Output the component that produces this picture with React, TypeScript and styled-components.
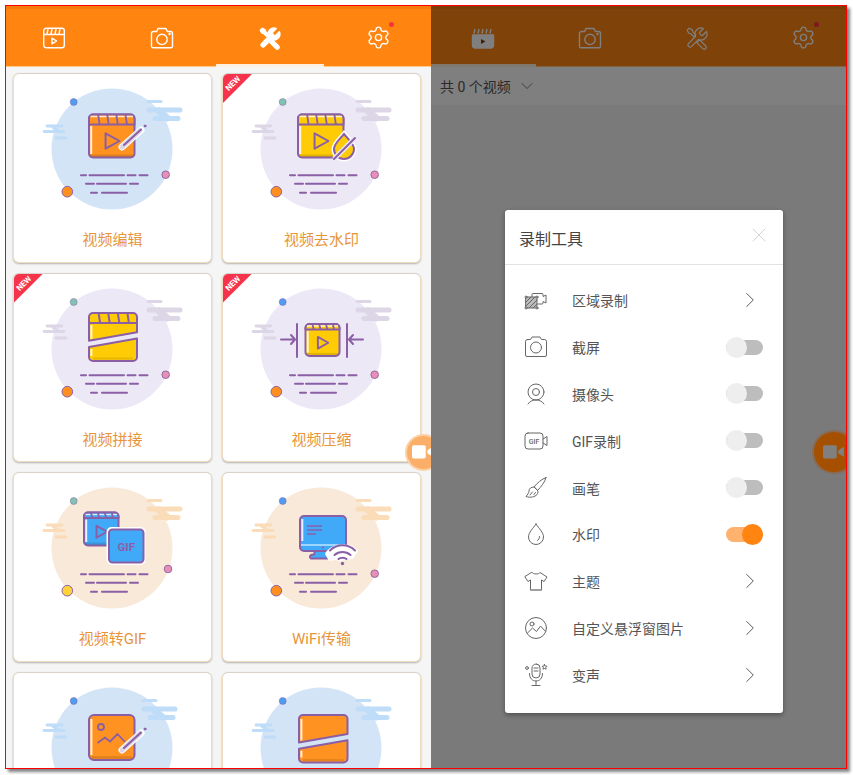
import React from "react";
import styled, { createGlobalStyle } from "styled-components";
import { ChevronDown, ChevronRight, Settings, X } from "lucide-react";

const PURPLE = "#8a5fa6";
const ORANGE = "#ff8410";

const GlobalStyle = createGlobalStyle`
  html, body {
    margin: 0;
    padding: 0;
    height: 100%;
    overflow: hidden;
    background: #fff;
  }
  body {
    font-family: Roboto, "Noto Sans CJK SC", sans-serif;
  }
  * {
    box-sizing: border-box;
  }
`;

const Page = styled.div`
  padding: 5px;
`;

const Frame = styled.div`
  display: flex;
  width: 842px;
  height: 764px;
  border: 1px solid #f00;
  box-shadow: 3px 3px 3px #808080;
  overflow: hidden;
`;

const Pane = styled.section<{ $width?: number }>`
  position: relative;
  flex: ${({ $width }) => ($width ? `0 0 ${$width}px` : "1")};
  overflow: hidden;
  background: #f5f5f5;
`;

const TabBar = styled.div<{ $tab: number; $shift: number }>`
  display: grid;
  grid-template-columns: repeat(4, ${({ $tab }) => $tab}px);
  height: 61px;
  margin-left: ${({ $shift }) => -$shift}px;
  background: ${ORANGE};
  border-top: 3px solid #f47c0c;
  border-bottom: 1px solid #ffc98a;
`;

const TabItem = styled.div<{ $active?: boolean }>`
  position: relative;
  display: flex;
  align-items: center;
  justify-content: center;
  color: #fff;
  &::after {
    content: "";
    position: absolute;
    left: 0;
    right: 0;
    bottom: -1px;
    height: 3px;
    background: ${({ $active }) => ($active ? "#fdf0df" : "transparent")};
  }
`;

const GearWrap = styled.div`
  position: relative;
  display: flex;
`;

const RedDot = styled.span`
  position: absolute;
  top: -3px;
  right: -3px;
  width: 5px;
  height: 5px;
  border-radius: 50%;
  background: #f8333c;
`;

const Grid = styled.div`
  display: grid;
  grid-template-columns: repeat(2, 199px);
  grid-auto-rows: 189.6px;
  gap: 10px;
  padding: 6px 7px;
`;

const CardBox = styled.div`
  position: relative;
  display: flex;
  flex-direction: column;
  align-items: center;
  background: #fff;
  border: 1px solid #f0dcbc;
  border-top-color: #d8d2ca;
  border-radius: 6px;
  box-shadow: 0 1px 2px rgba(0, 0, 0, 0.28);
  overflow: hidden;
`;

const Art = styled.svg`
  display: block;
  flex: none;
  width: 197px;
  height: 150px;
`;

const CardTitle = styled.div`
  margin-top: 6px;
  font-size: 15px;
  line-height: 20px;
  color: #e8953a;
`;

const Ribbon = styled.div`
  position: absolute;
  top: -1px;
  left: -1px;
  width: 31px;
  height: 31px;
  background: #f5344c;
  clip-path: polygon(0 0, 100% 0, 0 100%);
`;

const RibbonText = styled.span`
  position: absolute;
  top: 6px;
  left: 0;
  width: 22px;
  font-size: 8px;
  line-height: 9px;
  font-weight: 700;
  text-align: center;
  color: #fff;
  transform: rotate(-45deg);
`;

const Ball = styled.div<{ $size: number; $x: number; $pad: number; $bg: string; $ring: string; $cam: string }>`
  position: absolute;
  top: ${({ $size }) => 446 - $size / 2}px;
  left: ${({ $x }) => $x}px;
  display: flex;
  align-items: center;
  width: ${({ $size }) => $size}px;
  height: ${({ $size }) => $size}px;
  padding-left: ${({ $pad }) => $pad}px;
  border-radius: 50%;
  background: ${({ $bg }) => $bg};
  box-shadow: 0 0 0 2px ${({ $ring }) => $ring};
  color: ${({ $cam }) => $cam};
  z-index: 3;
`;

const SubBar = styled.div`
  display: flex;
  align-items: center;
  gap: 6px;
  height: 38px;
  padding-left: 9px;
  background: #fff;
  font-size: 14px;
  color: #555;
`;

const Overlay = styled.div`
  position: absolute;
  inset: 0;
  padding: 204px 0 0 74px;
  background: rgba(0, 0, 0, 0.5);
  z-index: 2;
`;

const Dialog = styled.div`
  width: 278px;
  height: 503px;
  background: #fff;
  border-radius: 3px;
  box-shadow: 0 2px 5px rgba(0, 0, 0, 0.35);
`;

const DialogHead = styled.div`
  display: flex;
  justify-content: space-between;
  height: 55px;
  padding: 19px 12px 0 14px;
  border-bottom: 1px solid #e2e2e2;
  font-size: 16px;
  line-height: 22px;
  color: #444;
  svg {
    margin-top: -6.5px;
    color: #c9c9c9;
  }
`;

const List = styled.div`
  padding: 12px 0;
`;

const Row = styled.div`
  display: flex;
  align-items: center;
  height: 46.8px;
  padding: 0 20px 0 19px;
  font-size: 14px;
  color: #555;
`;

const RowIcon = styled.svg`
  flex: none;
  width: 24px;
  height: 24px;
  margin-right: 24px;
  fill: none;
  stroke: #666;
  stroke-width: 1;
  stroke-linecap: round;
  stroke-linejoin: round;
`;

const RowLabel = styled.span`
  flex: 1;
`;

const Arrow = styled(ChevronRight)`
  color: #555;
`;

const Track = styled.div<{ $on?: boolean }>`
  position: relative;
  width: 37px;
  height: 15px;
  border-radius: 8px;
  background: ${({ $on }) => ($on ? "#ffb26e" : "#bdbdbd")};
`;

const Thumb = styled.span<{ $on?: boolean }>`
  position: absolute;
  top: -3px;
  left: ${({ $on }) => ($on ? 16 : 0)}px;
  width: 21px;
  height: 21px;
  border-radius: 50%;
  background: ${({ $on }) => ($on ? ORANGE : "#eeeeee")};
`;

const TOOLS_PATH =
  "M14.7 6.3a1 1 0 0 0 0 1.4l1.6 1.6a1 1 0 0 0 1.4 0l3.77-3.77a6 6 0 0 1-7.94 7.94l-6.91 6.91a2.12 2.12 0 0 1-3-3l6.91-6.91a6 6 0 0 1 7.94-7.94l-3.76 3.76z";
const TOOLS_BLADE =
  "M2.2 4.2 4.2 2.2 7 3.6 8 6l2.9 2.9-2 2L6 8 3.6 7zM14.6 13.8l6.2 6.2a2 2 0 0 1-2.8 2.8l-6.2-6.2z";

const ClapperIcon = ({ filled }: { filled?: boolean }) => (
  <svg width="24" height="22" viewBox="0 0 24 22" fill="none" stroke="currentColor" strokeWidth="1.4" strokeLinejoin="round">
    {filled ? (
      <>
        <path d="M1.5 8h21v10.5a2.5 2.5 0 0 1-2.5 2.5H4a2.5 2.5 0 0 1-2.5-2.5z" fill="currentColor" />
        <path d="M3 6.5 4 2M7 6.5 8 2M11 6.5 12 2M15 6.5 16 2M19 6.5 20 2" />
        <path d="M10 12v5l4.5-2.5z" fill="#804208" stroke="none" />
      </>
    ) : (
      <>
        <rect x="1.7" y="1.3" width="20.6" height="19.4" rx="2.5" />
        <path d="M1.7 7.5h20.6M5 7l1-5M9 7l1-5M13 7l1-5M17 7l1-5" />
        <path d="M10 11.2v5.6l4.6-2.8z" />
      </>
    )}
  </svg>
);

const CameraIcon = () => (
  <svg width="24" height="22" viewBox="0 0 24 22" fill="none" stroke="currentColor" strokeWidth="1.4" strokeLinejoin="round">
    <path d="M3.5 4.5h3.2L8 1.5h8l1.3 3h3.2a2 2 0 0 1 2 2v12.7a1.6 1.6 0 0 1-1.6 1.6H3.1a1.6 1.6 0 0 1-1.6-1.6V6.5a2 2 0 0 1 2-2z" />
    <circle cx="12" cy="12.4" r="5.2" />
    <circle cx="19.6" cy="7" r=".5" fill="currentColor" />
  </svg>
);

const ToolsIcon = ({ filled }: { filled?: boolean }) => (
  <svg
    width="24"
    height="24"
    viewBox="0 0 24 24"
    fill={filled ? "currentColor" : "none"}
    stroke="currentColor"
    strokeWidth="1.2"
    strokeLinejoin="round"
  >
    <path d={TOOLS_PATH} />
    <path d={TOOLS_BLADE} />
  </svg>
);

const GearIcon = () => (
  <GearWrap>
    <Settings size={25} strokeWidth={1.3} />
    <RedDot />
  </GearWrap>
);

const FloatCam = ({ size }: { size: number }) => (
  <svg width={size} height={size * 0.62} viewBox="0 0 20 12" fill="currentColor">
    <rect x="0" y="0" width="12.5" height="12" rx="1.5" />
    <path d="M14 4.5 19 1.5v9l-5-3z" />
  </svg>
);

const Clapper = ({
  x,
  y,
  w,
  h,
  fill,
  strip = 10,
}: {
  x: number;
  y: number;
  w: number;
  h: number;
  fill: string;
  strip?: number;
}) => {
  const cx = x + w / 2;
  const cy = y + strip + (h - strip) / 2;
  const s = Math.min(w, h) * 0.18;
  return (
    <g stroke={PURPLE} strokeWidth="2" strokeLinejoin="round">
      <rect x={x} y={y} width={w} height={h} rx="4" fill={fill} />
      <path d={`M${x + 2.2} ${y + strip + 1.5}v${h - strip - 5}`} stroke="#fff" strokeOpacity=".85" strokeWidth="2" />
      <path d={`M${x + 1.2} ${y + h - 3}h${w - 2.4}v.8a1.4 1.4 0 0 1-1.4 1.4h${-(w - 5.2)}a1.4 1.4 0 0 1-1.4-1.4z`} fill="#000" fillOpacity=".12" stroke="none" />
      <path d={`M${x} ${y + strip}V${y + 4}a4 4 0 0 1 4-4h${w - 8}a4 4 0 0 1 4 4v${strip - 4}z`} fill={fill} />
      <path d={`M${x + 1.5} ${y + 2}h${w - 3}`} stroke="#fff" strokeWidth="1.3" strokeOpacity=".8" />
      {[0.2, 0.4, 0.6, 0.8].map((p) => (
        <path key={p} d={`M${x + w * p} ${y}l1.5 ${strip}`} strokeWidth="1.8" />
      ))}
      <path d={`M${cx - s * 0.8} ${cy - s}v${s * 2}l${s * 1.8} ${-s}z`} fill="none" />
    </g>
  );
};

const Pencil = () => (
  <g fill="none" strokeLinecap="round">
    <path d="M109 74 128 57" stroke="#fff" strokeWidth="7" />
    <path d="M109 74 127 57.5" stroke="#dcd6e6" strokeWidth="5" />
    <path d="M111 72 128 56.5" stroke={PURPLE} strokeWidth="2" />
    <circle cx="132" cy="53" r="1" fill={PURPLE} stroke={PURPLE} />
  </g>
);

const SplitBlock = ({ x, y, w, h, fill, strip }: { x: number; y: number; w: number; h: number; fill: string; strip?: boolean }) => {
  const right = x + w;
  const bottom = y + h;
  const topL = y + h * 0.58;
  const topR = y + h * 0.4;
  const gap = h * 0.13;
  return (
    <g stroke={PURPLE} strokeWidth="2" strokeLinejoin="round" fill={fill}>
      <path d={`M${x} ${topL}V${y + 4}a4 4 0 0 1 4-4h${w - 8}a4 4 0 0 1 4 4V${topR}z`} />
      <path d={`M${x} ${topL + gap}L${right} ${topR + gap}V${bottom - 4}a4 4 0 0 1-4 4H${x + 4}a4 4 0 0 1-4-4z`} />
      <path d={`M${x + 2.4} ${y + (strip ? 12 : 4)}V${topL - 2}`} stroke="#fff" strokeOpacity=".85" />
      <path d={`M${x + 2.4} ${topL + gap + 2}V${bottom - 5}`} stroke="#fff" strokeOpacity=".85" />
      <path d={`M${x + 4} ${bottom - 2.4}H${right - 4}`} stroke="#000" strokeOpacity=".1" />
      {strip && (
        <>
          <path d={`M${x} ${y + 10}H${right}`} fill="none" />
          {[0.2, 0.4, 0.6, 0.8].map((p) => (
            <path key={p} d={`M${x + w * p} ${y}l1.5 10`} fill="none" />
          ))}
        </>
      )}
    </g>
  );
};

const EditArt = () => (
  <>
    <Clapper x={76} y={41.5} w={45.5} h={43} fill="#ff9220" />
    <Pencil />
  </>
);

const WatermarkArt = () => (
  <>
    <Clapper x={76} y={41.5} w={45.5} h={43} fill="#ffcb05" />
    <path d="M122 61c-5 6-10 10-10 15a10 10 0 0 0 20 0c0-5-5-9-10-15z" fill="#ffcb05" stroke="#fff" strokeWidth="5" />
    <path d="M122 61c-5 6-10 10-10 15a10 10 0 0 0 20 0c0-5-5-9-10-15z" fill="#ffcb05" stroke={PURPLE} strokeWidth="2" />
    <path d="M112 86 133 65" stroke="#ede8f6" strokeWidth="5" />
    <path d="M112 86 133 65" stroke={PURPLE} strokeWidth="2" strokeLinecap="round" />
  </>
);

const CompressArt = () => (
  <>
    <Clapper x={83.5} y={51} w={34} h={32} fill="#ffcb05" strip={5.5} />
    <g stroke={PURPLE} strokeWidth="2" fill="none" strokeLinecap="round" strokeLinejoin="round">
      <path d="M75 51v33M125 51v33M59 66.5h13M69 62l4 4.5-4 4.5M141 66.5h-13M131 62l-4 4.5 4 4.5" />
    </g>
  </>
);

const GifArt = () => (
  <>
    <Clapper x={71} y={40.5} w={34.5} h={33} fill="#41aaf8" strip={5.5} />
    <rect x="93.5" y="55" width="39" height="38" rx="5" fill="#fff" />
    <rect x="96" y="57.5" width="34.5" height="33" rx="3.5" fill="#41aaf8" stroke={PURPLE} strokeWidth="2" />
    <text x="113.3" y="78.5" textAnchor="middle" fontFamily="Roboto, sans-serif" fontWeight="700" fontSize="11.5" fill={PURPLE}>
      GIF
    </text>
  </>
);

const WifiArt = () => (
  <>
    <g stroke={PURPLE} strokeWidth="2" strokeLinejoin="round">
      <path d="M93 79h18l1 5h6a1 1 0 0 1 0 2.5H89a2 2 0 0 1 0-3.500l3-.5z" fill="#41aaf8" />
      <rect x="78" y="44" width="46" height="35" rx="4" fill="#41aaf8" />
      <path d="M80.300 47v22" stroke="#fff" strokeOpacity=".85" />
      <path d="M79 73h44" stroke="#fff" strokeOpacity=".5" />
      <path d="M85 54h15M85 58h15M85 62h9" strokeWidth="1.3" />
    </g>
    <circle cx="101" cy="75.500" r="1.100" fill={PURPLE} />
    <path d="M103 82c3-10 26-14 33-3l-5 8-13 2-5-1-6 1z" fill="#fff" />
    <g stroke={PURPLE} strokeWidth="2" fill="none" strokeLinecap="round">
      <path d="M108 78.500c7-7 18-7 25 0M112.500 83c4.500-4 11.500-4 16 0M116.500 87c2-1.700 6-1.700 8 0" />
    </g>
    <circle cx="120.500" cy="91.500" r="1.700" fill={PURPLE} />
  </>
);

const ImageArt = () => (
  <>
    <rect x="76" y="43" width="45.500" height="45" rx="5" fill="#ff9220" stroke={PURPLE} strokeWidth="2" />
    <path d="M78.400 47v36" stroke="#fff" strokeOpacity=".85" strokeWidth="2" />
    <path d="M78.500 85.500h40.500" stroke="#000" strokeOpacity=".12" strokeWidth="2.500" />
    <circle cx="88" cy="55" r="3" fill="none" stroke={PURPLE} strokeWidth="1.800" />
    <path d="M84.500 71 92 65.500 97 69.500 104.500 62 112 70" fill="none" stroke={PURPLE} strokeWidth="1.800" strokeLinejoin="round" />
    <g transform="translate(0 4)">
      <Pencil />
    </g>
  </>
);

type CardData = {
  title?: string;
  isNew?: boolean;
  bg: string;
  cloud: string;
  top: string;
  bottom?: string;
  cloudShift?: number;
  pinkX?: number;
  pinkY?: number;
  art: React.ReactNode;
};

const BLUE_BG = "#d3e4f6";
const LILAC_BG = "#ede8f6";
const CREAM_BG = "#f8e9d9";
const BLUE_CLOUD = "#bfdcf8";
const LILAC_CLOUD = "#dcd6e6";
const CREAM_CLOUD = "#fbdcb8";

// the last row runs off the bottom of the picture, its titles are not visible
const cards: CardData[] = [
  { title: "视频编辑", bg: BLUE_BG, cloud: BLUE_CLOUD, top: "#4f9cf0", art: <EditArt /> },
  { title: "视频去水印", isNew: true, bg: LILAC_BG, cloud: LILAC_CLOUD, top: "#7fc4b0", art: <WatermarkArt /> },
  {
    title: "视频拼接",
    isNew: true,
    bg: LILAC_BG,
    cloud: LILAC_CLOUD,
    top: "#7fc4b0",
    art: <SplitBlock x={76} y={40} w={48} h={48} fill="#ffcb05" strip />,
  },
  { title: "视频压缩", isNew: true, bg: LILAC_BG, cloud: LILAC_CLOUD, top: "#4f9cf0", art: <CompressArt /> },
  {
    title: "视频转GIF",
    bg: CREAM_BG,
    cloud: CREAM_CLOUD,
    top: "#7fc4b0",
    bottom: "#ffd23c",
    pinkX: 155,
    pinkY: 97,
    art: <GifArt />,
  },
  { title: "WiFi传输", bg: CREAM_BG, cloud: CREAM_CLOUD, top: "#4f9cf0", art: <WifiArt /> },
  { bg: BLUE_BG, cloud: BLUE_CLOUD, top: "#4f9cf0", cloudShift: -5, art: <ImageArt /> },
  {
    bg: BLUE_BG,
    cloud: BLUE_CLOUD,
    top: "#4f9cf0",
    art: <SplitBlock x={77} y={43} w={48.500} h={47.500} fill="#ff9220" />,
  },
];

const Illustration = ({ data }: { data: CardData }) => {
  const shift = data.cloudShift ?? 0;
  return (
    <Art viewBox="1 1 197 150">
      <circle cx="99" cy="76" r="60.500" fill={data.bg} />
      <g stroke={data.cloud} strokeLinecap="round" fill="none">
        <path d={`M${135 + shift} 28.500h13`} strokeWidth="3" />
        <path d={`M${136 + shift} 37h31M${142 + shift} 45.500h23`} strokeWidth="5" />
        <path d={`M${146 + shift} 38l8 7`} strokeWidth="7" />
        <path d="M34 53h15M31 58.500h20M43 65h10" strokeWidth="2.800" />
        <path d="M40 54l5 4" strokeWidth="3.500" />
      </g>
      <g stroke={PURPLE} strokeWidth="2" strokeLinecap="round">
        <path d="M68 102.300h5M76.500 102.300h34.500M114.500 102.300h8M126.500 102.300h8" />
        <path d="M73 110.700h8M84 110.700h29M117 110.700h8" />
        <path d="M78 119.700h6M89 119.700h25" />
      </g>
      <circle cx="60.700" cy="29" r="3.500" fill={data.top} stroke={PURPLE} strokeOpacity=".6" strokeWidth=".8" />
      <circle cx={data.pinkX ?? 152.700} cy={data.pinkY ?? 101.700} r="3.800" fill="#e78fb4" stroke={PURPLE} strokeWidth=".9" />
      <circle cx="54.300" cy="118.700" r="5.300" fill={data.bottom ?? "#ff8f1f"} stroke={PURPLE} strokeWidth="1" />
      {data.art}
    </Art>
  );
};

const Card = ({ data }: { data: CardData }) => (
  <CardBox>
    <Illustration data={data} />
    {data.title && <CardTitle>{data.title}</CardTitle>}
    {data.isNew && (
      <Ribbon>
        <RibbonText>NEW</RibbonText>
      </Ribbon>
    )}
  </CardBox>
);

const Switch = ({ on }: { on?: boolean }) => (
  <Track $on={on}>
    <Thumb $on={on} />
  </Track>
);

const RegionIcon = () => (
  <RowIcon viewBox="0 0 24 24">
    <path d="M8 8.500V6.500a1 1 0 0 1 1-1h9a1 1 0 0 1 1 1v2l3-1.500v8l-3-1.500v1.500a1 1 0 0 1-1 1h-4" />
    <rect x="2" y="9" width="11" height="11" fill="#bbb" stroke="#666" />
    <path d="M2 14l5-5M2 18l9-9M5 20l8-8M9 20l4-4" />
    <circle cx="2" cy="9" r="1" fill="#fff" />
    <circle cx="13" cy="9" r="1" fill="#fff" />
    <circle cx="2" cy="20" r="1" fill="#fff" />
    <circle cx="13" cy="20" r="1" fill="#fff" />
  </RowIcon>
);

const PhotoIcon = () => (
  <RowIcon viewBox="0 0 24 24">
    <path d="M3.500 4.500h3L8 2h8l1.500 2.500h3a2 2 0 0 1 2 2V20a1.500 1.500 0 0 1-1.500 1.500H3A1.500 1.500 0 0 1 1.500 20V6.500a2 2 0 0 1 2-2z" />
    <circle cx="12" cy="12.500" r="5.500" />
  </RowIcon>
);

const WebcamIcon = () => (
  <RowIcon viewBox="0 0 24 24">
    <circle cx="12" cy="10" r="8" />
    <circle cx="12" cy="10" r="3.500" />
    <path d="M4 22c2-3 5-4 8-4s6 1 8 4" />
  </RowIcon>
);

const GifIcon = () => (
  <RowIcon viewBox="0 0 24 24">
    <rect x="1" y="4" width="18" height="16" rx="3" />
    <path d="M19 10l4-2.500v9L19 14" />
    <text x="10" y="15" textAnchor="middle" fontFamily="Roboto, sans-serif" fontSize="7" fontWeight="500" fill="#666" stroke="none">
      GIF
    </text>
  </RowIcon>
);

const BrushIcon = () => (
  <RowIcon viewBox="0 0 24 24">
    <path d="M22 1.500C18 3 13 7 10 11l3.500 3.500C17 11 21 6 22 1.500z" />
    <path d="M10 11c-3 0-5 1.500-5 4 0 2-1.500 3.500-3 5.500 4 1.500 9 .5 11-2 1.500-1.800 1-3 .5-4z" />
    <path d="M6 19l2.500-3M10 18.500l1.500-2" />
  </RowIcon>
);

const DropIcon = () => (
  <RowIcon viewBox="0 0 24 24">
    <path d="M12 2c-3 4.500-7.500 8.500-7.500 13a7.500 7.500 0 0 0 15 0C19.500 10.500 15 6.500 12 2z" />
    <path d="M15.500 14.500c0 2-.8 3.200-2 4" />
  </RowIcon>
);

const ShirtIcon = () => (
  <RowIcon viewBox="0 0 24 24">
    <path d="M8 3.500c1 2 7 2 8 0l7 4.500-3 4.500-2.500-1.500V21H6.500V11L4 12.500 1 8z" />
    <path d="M6.500 21h11" stroke="#999" strokeWidth="1.500" />
  </RowIcon>
);

const PictureIcon = () => (
  <RowIcon viewBox="0 0 24 24">
    <circle cx="12" cy="12" r="10.500" />
    <circle cx="8" cy="8" r="2" />
    <path d="M3.500 17l5-5 4 3.500 4-5.500 5 5.500" />
  </RowIcon>
);

const MicIcon = () => (
  <RowIcon viewBox="0 0 24 24">
    <rect x="8" y="1" width="8" height="14" rx="4" />
    <path d="M10 5h4M10 8h4M5.500 10.500c0 5 3 7.500 6.500 7.500s6.500-2.500 6.500-7.500M12 18v4M8 22.500h8" />
    <circle cx="3" cy="5" r="1.400" />
    <path d="M20.500 1.500l.8 1.500 1.700.3-1.200 1.200.3 1.700-1.600-.8-1.500.8.300-1.700-1.200-1.200 1.700-.3z" />
  </RowIcon>
);

const DialogRows = () => (
  <List>
    <Row><RegionIcon /><RowLabel>区域录制</RowLabel><Arrow size={26} strokeWidth={0.9} /></Row>
    <Row><PhotoIcon /><RowLabel>截屏</RowLabel><Switch /></Row>
    <Row><WebcamIcon /><RowLabel>摄像头</RowLabel><Switch /></Row>
    <Row><GifIcon /><RowLabel>GIF录制</RowLabel><Switch /></Row>
    <Row><BrushIcon /><RowLabel>画笔</RowLabel><Switch /></Row>
    <Row><DropIcon /><RowLabel>水印</RowLabel><Switch on /></Row>
    <Row><ShirtIcon /><RowLabel>主题</RowLabel><Arrow size={26} strokeWidth={0.9} /></Row>
    <Row><PictureIcon /><RowLabel>自定义悬浮窗图片</RowLabel><Arrow size={26} strokeWidth={0.9} /></Row>
    <Row><MicIcon /><RowLabel>变声</RowLabel><Arrow size={26} strokeWidth={0.9} /></Row>
  </List>
);

export default function App() {
  return (
    <Page>
      <GlobalStyle />
      <Frame>
        <Pane $width={425}>
          <TabBar $tab={108} $shift={6}>
            <TabItem><ClapperIcon /></TabItem>
            <TabItem><CameraIcon /></TabItem>
            <TabItem $active><ToolsIcon filled /></TabItem>
            <TabItem><GearIcon /></TabItem>
          </TabBar>
          <Grid>
            {cards.map((card, index) => (
              <Card key={index} data={card} />
            ))}
          </Grid>
          <Ball $size={33} $x={401} $pad={5} $bg="#fbae68" $ring="#fcd0a5" $cam="#fff">
            <FloatCam size={22} />
          </Ball>
        </Pane>
        <Pane>
          <TabBar $tab={107} $shift={2}>
            <TabItem $active><ClapperIcon filled /></TabItem>
            <TabItem><CameraIcon /></TabItem>
            <TabItem><ToolsIcon /></TabItem>
            <TabItem><GearIcon /></TabItem>
          </TabBar>
          <SubBar>
            共 0 个视频 <ChevronDown size={20} strokeWidth={0.9} />
          </SubBar>
          <Overlay>
            <Dialog>
              <DialogHead>
                录制工具
                <X size={24} strokeWidth={0.8} />
              </DialogHead>
              <DialogRows />
            </Dialog>
          </Overlay>
          <Ball $size={40} $x={383} $pad={9} $bg="#a45000" $ring="#8a6a50" $cam="#808080">
            <FloatCam size={22} />
          </Ball>
        </Pane>
      </Frame>
    </Page>
  );
}
